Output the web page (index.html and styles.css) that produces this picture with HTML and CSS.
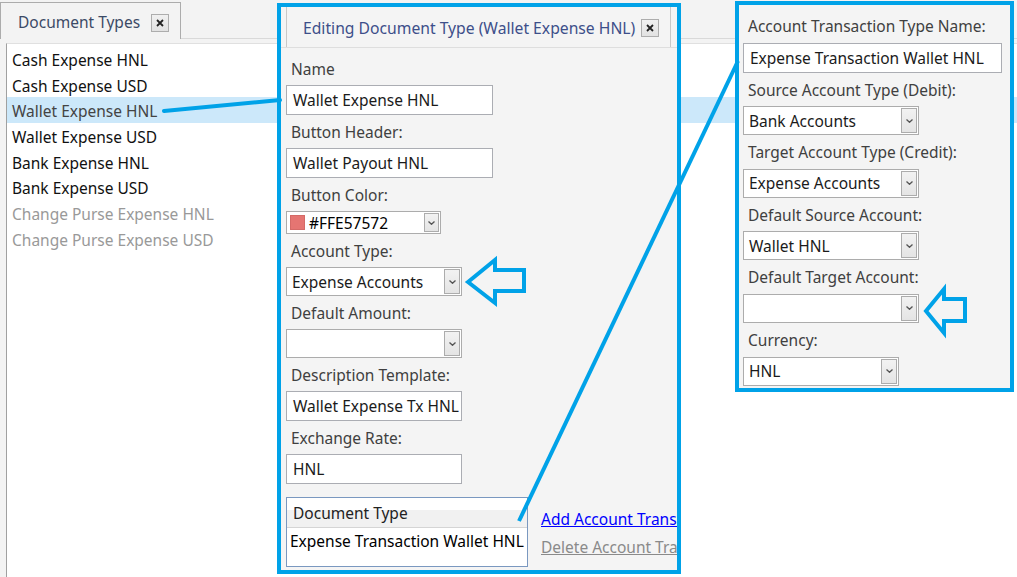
FILE: index.html
```html
<!DOCTYPE html>
<html lang="en">
<head>
	<meta charset="UTF-8">
	<title>Document Types</title>
	<link rel="stylesheet" href="styles.css">
</head>
<body>
	<div class="app">
		<div class="tabstrip">
			<div class="tab">
				<span class="tab-title">Document Types</span>
				<span class="tab-close"><svg width="8" height="8" viewBox="0 0 8 8"><path d="M1 1 L7 7 M7 1 L1 7" stroke="#222" stroke-width="1.8"/></svg></span>
			</div>
		</div>
		<ul class="doc-list">
			<li>Cash Expense HNL</li>
			<li>Cash Expense USD</li>
			<li class="selected">Wallet Expense HNL</li>
			<li>Wallet Expense USD</li>
			<li>Bank Expense HNL</li>
			<li>Bank Expense USD</li>
			<li class="inactive">Change Purse Expense HNL</li>
			<li class="inactive">Change Purse Expense USD</li>
		</ul>
	</div>

	<!-- document type editor -->
	<section class="callout editor">
		<div class="editor-tabs">
			<div class="editor-tab">
				<span class="editor-title">Editing Document Type (Wallet Expense HNL)</span>
				<span class="tab-close"><svg width="8" height="8" viewBox="0 0 8 8"><path d="M1 1 L7 7 M7 1 L1 7" stroke="#222" stroke-width="1.8"/></svg></span>
			</div>
		</div>
		<div class="form">
			<label class="field-label">Name</label>
			<div class="textbox wide">Wallet Expense HNL</div>

			<label class="field-label">Button Header:</label>
			<div class="textbox wide">Wallet Payout HNL</div>

			<label class="field-label">Button Color:</label>
			<div class="combo color-combo">
				<span class="swatch"></span>
				<span class="combo-text">#FFE57572</span>
				<span class="drop"><svg width="7" height="4" viewBox="0 0 7 4"><path d="M0.5 0.5 L3.5 3.3 L6.5 0.5" fill="none" stroke="#555" stroke-width="1.3"/></svg></span>
			</div>

			<label class="field-label">Account Type:</label>
			<div class="combo">
				<span class="combo-text">Expense Accounts</span>
				<span class="drop"><svg width="7" height="4" viewBox="0 0 7 4"><path d="M0.5 0.5 L3.5 3.3 L6.5 0.5" fill="none" stroke="#555" stroke-width="1.3"/></svg></span>
			</div>

			<label class="field-label">Default Amount:</label>
			<div class="combo">
				<span class="combo-text"></span>
				<span class="drop"><svg width="7" height="4" viewBox="0 0 7 4"><path d="M0.5 0.5 L3.5 3.3 L6.5 0.5" fill="none" stroke="#555" stroke-width="1.3"/></svg></span>
			</div>

			<label class="field-label">Description Template:</label>
			<div class="textbox">Wallet Expense Tx HNL</div>

			<label class="field-label">Exchange Rate:</label>
			<div class="textbox">HNL</div>

			<div class="tx-row">
				<div class="grid">
					<div class="grid-head">Document Type</div>
					<div class="grid-cell">Expense Transaction Wallet HNL</div>
				</div>
				<div class="tx-links">
					<a href="#" class="link">Add Account Transaction Type</a>
					<a href="#" class="link disabled">Delete Account Transaction Type</a>
				</div>
			</div>
		</div>
	</section>

	<!-- account transaction type editor -->
	<section class="callout tx-type">
		<div class="form">
			<label class="field-label">Account Transaction Type Name:</label>
			<div class="textbox name">Expense Transaction Wallet HNL</div>

			<label class="field-label">Source Account Type (Debit):</label>
			<div class="combo">
				<span class="combo-text">Bank Accounts</span>
				<span class="drop"><svg width="7" height="4" viewBox="0 0 7 4"><path d="M0.5 0.5 L3.5 3.3 L6.5 0.5" fill="none" stroke="#555" stroke-width="1.3"/></svg></span>
			</div>

			<label class="field-label">Target Account Type (Credit):</label>
			<div class="combo">
				<span class="combo-text">Expense Accounts</span>
				<span class="drop"><svg width="7" height="4" viewBox="0 0 7 4"><path d="M0.5 0.5 L3.5 3.3 L6.5 0.5" fill="none" stroke="#555" stroke-width="1.3"/></svg></span>
			</div>

			<label class="field-label">Default Source Account:</label>
			<div class="combo">
				<span class="combo-text">Wallet HNL</span>
				<span class="drop"><svg width="7" height="4" viewBox="0 0 7 4"><path d="M0.5 0.5 L3.5 3.3 L6.5 0.5" fill="none" stroke="#555" stroke-width="1.3"/></svg></span>
			</div>

			<label class="field-label">Default Target Account:</label>
			<div class="combo">
				<span class="combo-text"></span>
				<span class="drop"><svg width="7" height="4" viewBox="0 0 7 4"><path d="M0.5 0.5 L3.5 3.3 L6.5 0.5" fill="none" stroke="#555" stroke-width="1.3"/></svg></span>
			</div>

			<label class="field-label">Currency:</label>
			<div class="combo short">
				<span class="combo-text">HNL</span>
				<span class="drop"><svg width="7" height="4" viewBox="0 0 7 4"><path d="M0.5 0.5 L3.5 3.3 L6.5 0.5" fill="none" stroke="#555" stroke-width="1.3"/></svg></span>
			</div>
		</div>
	</section>

	<!-- connector lines and pointer arrows -->
	<svg class="marks" width="1017" height="577" viewBox="0 0 1017 577">
		<g fill="none" stroke="#00a2e8" stroke-width="4">
			<line x1="164" y1="111" x2="280" y2="100" stroke-linecap="round"/>
			<line x1="519" y1="521" x2="738" y2="61"/>
			<polygon points="468,282 495,260 495,270 524,270 524,291 495,291 495,303"/>
			<polygon points="926,311 944,289 944,299 965,299 965,321 944,321 944,333"/>
		</g>
	</svg>
</body>
</html>
```

FILE: styles.css
```css
* { margin: 0; padding: 0; box-sizing: border-box;}
body { width: 1017px; height: 577px; overflow: hidden; position: relative; background: #f3f3f3; font-family: "Noto Sans", "Open Sans", sans-serif; font-size: 15.5px; color: #1b1b1b;}

/* main window */
.app { display: flex; flex-direction: column; height: 577px;}
.tabstrip { height: 39px; padding-top: 2px; border-bottom: 1px solid #d9d9d9; display: flex;}
.tab { width: 181px; height: 37px; border: 1px solid #acacac; border-bottom: none; background: #f3f3f3; display: flex; align-items: center; padding-left: 17px; margin-bottom: -1px;}
.tab-title { color: #3c4a66; font-size: 15.5px; padding-top: 2px;}
.tab-close { width: 18px; height: 18px; border: 1px solid #adadad; background: linear-gradient(#f0f0f0, #e2e2e2); display: flex; align-items: center; justify-content: center;}
.tab .tab-close { margin-left: 11px; margin-top: 3px;}

.doc-list { list-style: none; flex: 1; margin: 4px 0 0 6px; padding-top: 2px; background: #fff; border-left: 1px solid #a0a0a0; border-top: 1px solid #e0e0e0;}
.doc-list li { height: 25.7px; line-height: 27px; padding-left: 5px; padding-top: 1px; color: #111;}
.doc-list .selected { background: #cce8fa; color: #444;}
.doc-list .inactive { color: #999;}

/* framed editor snapshots */
.callout { position: absolute; border: 4px solid #00a2e8; background: #f4f4f4; overflow: hidden;}
.editor { left: 277px; top: 3px; width: 404px; height: 571px;}
.tx-type { left: 735px; top: 1px; width: 279px; height: 391px;}

.editor-tabs { height: 41px; border-bottom: 1px solid #dedede; padding-left: 5px; display: flex;}
.editor-tab { width: 385px; border-left: 1px solid #c8c8c8; border-right: 1px solid #c8c8c8; display: flex; align-items: center; padding-left: 16px;}
.editor-title { color: #3d4f8a; font-size: 15.7px; padding-top: 1px;}
.editor-tab .tab-close { width: 18px; height: 18px; margin-left: 6px; margin-top: 1px;}

.form { display: flex; flex-direction: column; align-items: flex-start; padding: 4px 0 0 5px;}
.tx-type .form { padding: 4px 0 0 4px;}
.field-label { display: block; height: 33px; line-height: 33px; padding-left: 5px; padding-top: 1px; color: #404040;}
.tx-type .field-label { height: 33.6px;}

.textbox { width: 176px; height: 30px; border: 1px solid #abadb3; background: #fff; padding-left: 6px; display: flex; align-items: center; white-space: nowrap; overflow: hidden;}
.textbox.wide { width: 207px;}
.textbox.name { width: 259px;}

.combo { width: 176px; height: 29px; border: 1px solid #acacac; background: #fff; padding: 1px; display: flex; align-items: stretch;}
.combo.short { width: 156px;}
.combo-text { flex: 1; padding-left: 4px; display: flex; align-items: center; white-space: nowrap;}
.drop { width: 16px; border: 1px solid #acacac; background: linear-gradient(#f2f2f2, #e4e4e4); display: flex; align-items: center; justify-content: center;}

.color-combo { width: 155px; height: 23px; align-items: center;}
.color-combo .drop { align-self: stretch; width: 15px;}
.swatch { width: 15px; height: 15px; margin-left: 2px; background: #e57572; border: 1px solid #d46a67;}
.color-combo .combo-text { padding-left: 4px; color: #000;}

.tx-row { display: flex; margin-top: 13px;}
.grid { width: 242px; height: 70px; border: 1px solid #7a98c0; background: #fff; overflow: hidden;}
.grid-head { height: 30px; line-height: 30px; padding-left: 6px; border-bottom: 1px solid #d5d5d5; background: linear-gradient(#fff 40%, #f1f1f1 40%); color: #222;}
.grid-cell { height: 27px; line-height: 27px; padding-left: 3px; white-space: nowrap; color: #000;}

.tx-links { display: flex; flex-direction: column; margin-left: 13px; padding-top: 9px; white-space: nowrap;}
.link { color: #0000ff; height: 28px; line-height: 26px;}
.link.disabled { color: #8a8a8a;}

.marks { position: absolute; left: 0; top: 0; pointer-events: none;}
```
